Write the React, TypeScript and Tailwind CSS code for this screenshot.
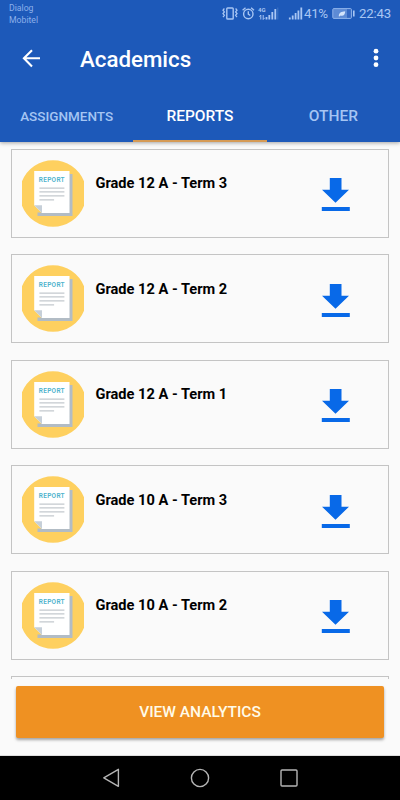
import React from 'react';

interface Report {
  id: number;
  title: string;
}

const REPORTS: Report[] = [
  { id: 1, title: 'Grade 12 A - Term 3' },
  { id: 2, title: 'Grade 12 A - Term 2' },
  { id: 3, title: 'Grade 12 A - Term 1' },
  { id: 4, title: 'Grade 10 A - Term 3' },
  { id: 5, title: 'Grade 10 A - Term 2' },
];

const StatusIcons: React.FC = () => (
  <svg width="82" height="16" viewBox="221 6 82 16" fill="none" stroke="#a9c6f3" className="shrink-0">
    {/* vibrate */}
    <rect x="226.8" y="8" width="6.4" height="11" rx="0.8" strokeWidth="1.4" />
    <path
      d="M224.4 8.5l-1.4 1.7 1.4 1.7-1.4 1.7 1.4 1.7-1.4 1.7M235.6 8.5l1.4 1.7-1.4 1.7 1.4 1.7-1.4 1.7 1.4 1.7"
      strokeWidth="1.3"
    />
    {/* alarm */}
    <circle cx="248.3" cy="14" r="4.7" strokeWidth="1.4" />
    <path d="M248.3 11.2v3l2 1.3M242.6 10.2l2.9-2.4M254 10.2l-2.9-2.4" strokeWidth="1.4" />
    {/* 4G data arrows */}
    <path d="M260.8 15v4.5M259.4 16.6l1.4-1.6M263.2 15v4.5M264.6 17.9l-1.4 1.6" strokeWidth="1" />
    {/* signal bars */}
    <path d="M266.5 17v2.5M269.3 15v4.5M272.3 12v7.5M275.3 9v10.5" strokeWidth="1.8" />
    <path d="M277.8 7.5v12" strokeWidth="1" opacity="0.25" />
    <path d="M289.8 17.5v2M292.7 15.5v4M295.6 13v6.5M298.4 10.5v9M301.3 7.5v12" strokeWidth="1.8" />
  </svg>
);

const BatteryIcon: React.FC = () => (
  <svg width="24" height="12" viewBox="332 8 24 12" className="shrink-0">
    <rect x="332.8" y="8.6" width="18.6" height="9.8" rx="1" fill="#5d8bd5" stroke="#8fb3ea" />
    <rect x="347" y="9.2" width="3.8" height="8.6" fill="#3468c2" />
    <path d="M353 10.5h1.6v6H353z" fill="#a9c6f3" />
    <path d="M338.8 16.2c0-3.2 2.4-4.7 6.4-4.9 0 3.4-1.8 5.1-4.6 4.2l-1.2 1z" fill="#d4e4fb" />
  </svg>
);

const ReportIcon: React.FC = () => (
  <svg width="64" height="68" viewBox="0 0 64 68" className="shrink-0">
    <path d="M1 21.3A33.3 33.3 0 0 1 63 21.3V45.7A33.3 33.3 0 0 1 1 45.7Z" fill="#fed05f" />
    <path d="M48 14h3.5v42H16.5v-3.5h31.5z" fill="#b2bcc5" />
    <path d="M13.2 11H48.5V53H21L13.2 45.2Z" fill="#fff" />
    <path d="M13.2 45.2H21V53Z" fill="#c6cfd8" />
    <path d="M18.4 28.1h25M18.4 31.9h25M18.4 35.9h25M18.4 39.8h14.7" stroke="#c3c9ce" strokeWidth="1.2" />
    <text
      x="17.8"
      y="21.6"
      textLength="25.8"
      fontSize="6.5"
      fontWeight="600"
      fill="#4fb3cd"
      fontFamily="Roboto, sans-serif"
    >
      REPORT
    </text>
  </svg>
);

const ReportCard: React.FC<{ report: Report }> = ({ report }) => (
  <article className="flex h-[89px] shrink-0 items-start border border-[#c4c4c4] pl-[9px] pt-[10px]">
    <ReportIcon />
    <h2 className="ml-[10.5px] mt-[13.6px] grow text-[14.6px] leading-5 font-bold text-black">{report.title}</h2>
    <button type="button" aria-label="Download" className="mr-[38px] mt-[17.4px]">
      <svg width="29" height="35" viewBox="0 0 29 35" fill="#0869e8" className="block">
        <path d="M8.8 1h11.7v11.7H28L14.5 25.7 1 12.7h7.8zM.8 30h28v4H.8z" />
      </svg>
    </button>
  </article>
);

export default function App() {
  return (
    <div className="flex h-[800px] w-[400px] flex-col overflow-hidden bg-[#fafafa] font-['Roboto',sans-serif]">
      <header className="z-10 flex h-[142px] shrink-0 flex-col bg-[#1d59b9] shadow-[0_1px_4px_rgba(0,0,0,0.35)]">
        <div className="flex h-7 items-start pl-[9px] text-[#a9c6f3]">
          <div className="mt-[2px] w-[212px] text-[8.7px] leading-3 text-[#8cb0ea]">
            <p>Dialog</p>
            <p>Mobitel</p>
          </div>
          <div className="relative mt-[6px]">
            <StatusIcons />
            <span className="absolute left-[37px] top-0 text-[6px] leading-[8px] font-bold">4G</span>
          </div>
          <span className="ml-[1px] mt-[5px] w-[26px] text-[13.4px] leading-[18px] tracking-[-0.4px]">41%</span>
          <div className="ml-[2px] mt-[8px]">
            <BatteryIcon />
          </div>
          <span className="ml-[3px] mt-[5px] text-[13.2px] leading-[18px] tracking-[-0.2px]">22:43</span>
        </div>
        <div className="flex h-[62px] items-center pl-[22px] text-white">
          <svg
            width="19"
            height="19"
            viewBox="0 0 19 19"
            fill="none"
            stroke="currentColor"
            strokeWidth="2.1"
            className="-mt-[2px]"
          >
            <path d="M18 9.3H2M10 1.2L1.9 9.3 10 17.4" />
          </svg>
          <h1 className="ml-[39px] grow text-[22.3px] leading-7 font-medium">Academics</h1>
          <svg width="6" height="20" viewBox="0 0 6 20" fill="currentColor" className="-mt-[2px] mr-[21.5px]">
            <circle cx="3" cy="3.2" r="2.4" />
            <circle cx="3" cy="10" r="2.4" />
            <circle cx="3" cy="16.7" r="2.4" />
          </svg>
        </div>
        <nav className="grid h-[52px] grid-cols-3 text-center leading-[53px] font-medium text-[#a5c5f3]">
          <span className="h-[52px] text-[13.5px]">ASSIGNMENTS</span>
          <span className="h-[52px] border-b-2 border-[#d59a55] text-[15.5px] text-white">REPORTS</span>
          <span className="h-[52px] text-[15.5px]">OTHER</span>
        </nav>
      </header>
      <main className="flex h-[537px] shrink-0 flex-col gap-[16.5px] overflow-hidden px-[11px] pt-[6.8px]">
        {REPORTS.map((report) => (
          <ReportCard key={report.id} report={report} />
        ))}
        <div className="h-[89px] shrink-0 border border-[#c4c4c4]" />
      </main>
      <div className="flex h-[77px] shrink-0 items-start border-b border-[#dedede] px-[15.6px] pt-[7px]">
        <button
          type="button"
          className="h-[52px] w-full rounded-[2px] bg-[#ef9122] pt-[2px] text-[15.5px] font-medium text-[#fffbe9] shadow-[0_2px_3px_rgba(0,0,0,0.35)]"
        >
          VIEW ANALYTICS
        </button>
      </div>
      <footer className="flex h-11 shrink-0 items-center justify-center bg-black">
        <svg width="196" height="20" viewBox="102 768 196 20" fill="none" stroke="#b5b5b5" strokeWidth="1.4" strokeLinejoin="round">
          <path d="M118.4 769.3v17L103.8 777.8z" />
          <circle cx="200" cy="778" r="8.6" />
          <rect x="281" y="770" width="16" height="16" rx="1" />
        </svg>
      </footer>
    </div>
  );
}
